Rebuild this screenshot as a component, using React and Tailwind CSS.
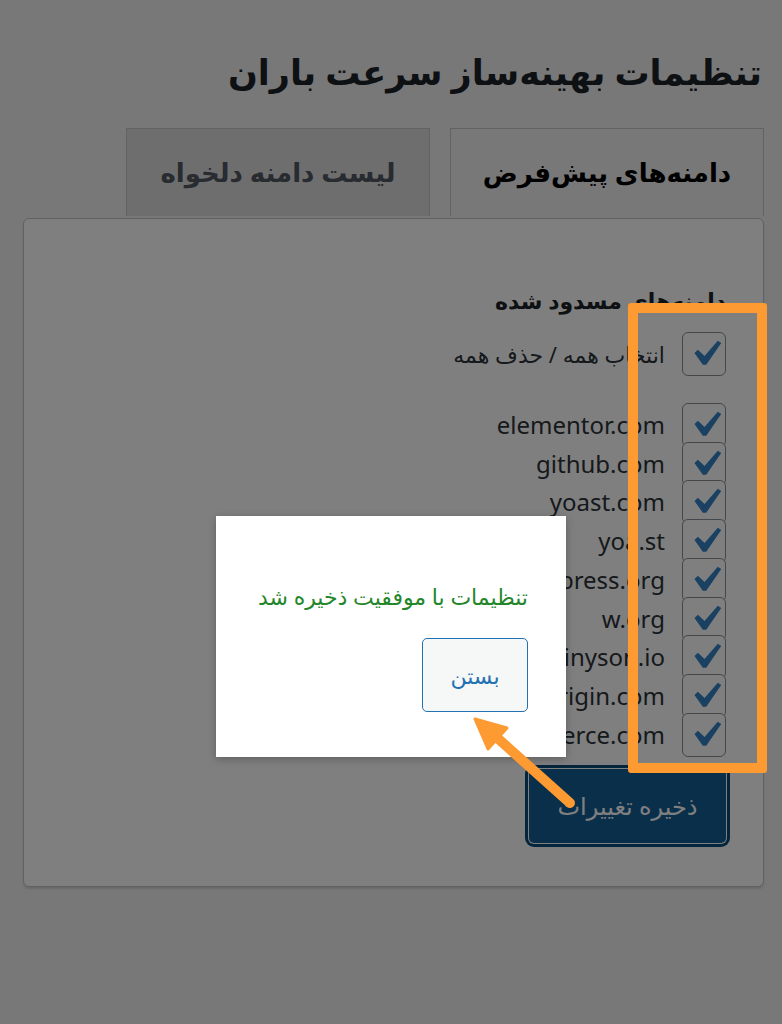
const domains = [
  "elementor.com",
  "github.com",
  "yoast.com",
  "yoa.st",
  "wordpress.org",
  "w.org",
  "tinyson.io",
  "siteorigin.com",
  "woocommerce.com",
];

function Check() {
  return (
    <span className="flex h-[44px] w-[44px] shrink-0 items-center justify-center rounded-[6px] border-[1.5px] border-[#8c8f94] bg-white">
      <svg width="44" height="44" viewBox="0 0 44 44">
        <path
          transform="translate(-3.6,-5.2) scale(2.7)"
          d="M14.83 4.89l1.34.94-5.81 8.38H9.02L5.78 9.67l1.34-1.25 2.57 2.4z"
          fill="#3582c4"
        />
      </svg>
    </span>
  );
}

export default function App() {
  return (
    <div
      dir="rtl"
      className="relative min-h-screen overflow-hidden bg-[#f0f0f1] text-[#1d2327]"
      style={{ fontFamily: '"Noto Sans", "DejaVu Sans", sans-serif' }}
    >
      <div className="pr-[18px] pl-[18px]">
        <h1 className="pt-[44px] pr-[2px] text-[35px] leading-[56px] font-bold">
          تنظیمات بهینه‌ساز سرعت باران
        </h1>

        {/* تب‌ها */}
        <div className="mt-[28px] flex gap-[20px]">
          <div className="flex h-[88px] w-[314px] items-center justify-center border border-b-0 border-[#c3c4c7] bg-[#f0f0f1] text-[26px] font-bold text-black">
            دامنه‌های پیش‌فرض
          </div>
          <div className="flex h-[88px] w-[304px] items-center justify-center border border-b-0 border-[#c3c4c7] bg-[#dcdcde] text-[26px] font-bold text-[#50575e]">
            لیست دامنه دلخواه
          </div>
        </div>

        {/* کارت */}
        <div className="mt-[2px] mr-0 ml-[5px] rounded-[6px] border border-[#c3c4c7] bg-white pt-[65px] pr-[37px] pb-[43px] shadow-[0_2px_2px_rgba(0,0,0,0.12)]">
          <h2 className="text-[22px] leading-[32px] font-bold">دامنه‌های مسدود شده</h2>

          <label className="mt-[16px] flex items-center gap-[17px]">
            <Check />
            <span className="text-[22px] text-[#2c3338]">انتخاب همه / حذف همه</span>
          </label>

          <ul className="mt-[27px] flex flex-col">
            {domains.map((d, i) => (
              <li
                key={d}
                className={
                  "flex h-[44px] items-center gap-[17px] " +
                  (i < domains.length - 1 ? "-mb-[5.3px]" : "")
                }
              >
                <Check />
                <span className="text-[24px] text-[#2c3338]">{d}</span>
              </li>
            ))}
          </ul>

          <button className="mt-[12px] h-[74px] w-[197px] rounded-[5px] bg-[#135e96] text-[24px] text-white shadow-[0_0_0_1px_#fff,0_0_0_4px_#0a4b78]">
            ذخیره تغییرات
          </button>
        </div>
      </div>

      {/* لایه تیره */}
      <div className="absolute inset-0 bg-black/50" />

      {/* پیام */}
      <div className="absolute top-[516px] left-[216px] h-[241px] w-[350px] bg-white pt-[64px] pr-[38px] shadow-[0_2px_8px_rgba(0,0,0,0.25)]">
        <p className="text-[22px] leading-[32px] text-[#23862a]">تنظیمات با موفقیت ذخیره شد</p>
        <button className="mt-[26px] h-[74px] w-[106px] rounded-[5px] border border-[#2271b1] bg-[#f6f7f7] text-[22px] text-[#2271b1]">
          بستن
        </button>
      </div>

      {/* حاشیه‌نویسی */}
      <div className="absolute top-[303px] left-[628px] h-[470px] w-[139px] rounded-[3px] border-[10px] border-[#fd9a32]" />
      <svg className="absolute top-0 left-0" width="782" height="1024">
        <line x1="570" y1="803" x2="494" y2="735" stroke="#fd9a32" strokeWidth="10" strokeLinecap="round" />
        <polygon points="475,719 488,749 507,728" fill="#fd9a32" stroke="#fd9a32" strokeWidth="3" strokeLinejoin="round" />
      </svg>
    </div>
  );
}
